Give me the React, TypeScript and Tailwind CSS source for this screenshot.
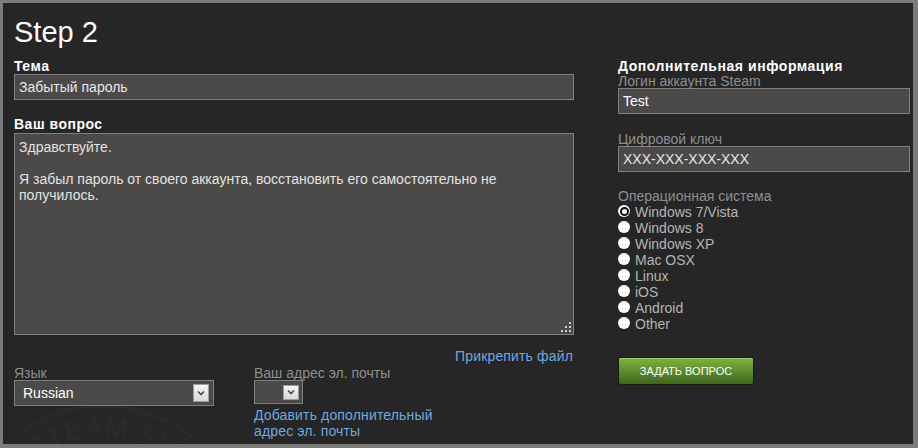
import React from "react";

const OS_LIST = [
  "Windows 7/Vista",
  "Windows 8",
  "Windows XP",
  "Mac OSX",
  "Linux",
  "iOS",
  "Android",
  "Other",
];

function DropButton({ small }: { small?: boolean }) {
  return (
    <span
      className={
        "flex w-[16px] items-center justify-center border border-[#9c9c9c] bg-gradient-to-b from-[#f4f4f4] to-[#d9d9d9] " +
        (small ? "h-[15px]" : "h-[18px]")
      }
    >
      <svg width="8" height="6" viewBox="0 0 8 6">
        <path d="M1 1.5 L4 4.5 L7 1.5" fill="none" stroke="#4a4a4a" strokeWidth="1.6" />
      </svg>
    </span>
  );
}

function Radio({ checked }: { checked?: boolean }) {
  return (
    <span className="mt-[1px] flex h-[12px] w-[12px] shrink-0 items-center justify-center rounded-full bg-white">
      {checked && <span className="h-[9px] w-[9px] rounded-full border-[2px] border-[#111] bg-white" />}
    </span>
  );
}

export default function App() {
  return (
    <div className="h-[448px] w-[918px] bg-[#7b7b79] pb-[4px] pl-[3px] pr-[5px] pt-[3px] font-['Liberation_Sans',Arial,sans-serif] text-[14px]">
      <div className="relative flex h-full gap-[44px] overflow-hidden bg-[#262626] pl-[11px] pt-[13px]">
        {/* faint watermark */}
        <svg className="pointer-events-none absolute left-0 top-0" width="910" height="441">
          <defs>
            <path id="wm" d="M -12 545 A 112 112 0 0 1 212 545" />
          </defs>
          <circle cx="100" cy="545" r="142" fill="none" stroke="#2a2a2a" strokeWidth="3" />
          <text fontSize="27" fill="#2b2b2b" letterSpacing="1" fontFamily="'Liberation Sans', Arial, sans-serif">
            <textPath href="#wm" startOffset="50%" textAnchor="middle">
              STEAM.SU
            </textPath>
          </text>
        </svg>

        {/* left column */}
        <div className="relative w-[560px]">
          <h1 className="text-[29px] leading-[33px] text-white">Step 2</h1>

          <div className="mt-[9px] font-bold leading-[16px] tracking-[0.5px] text-white">Тема</div>
          <div className="flex h-[26px] items-center border border-[#7f7f7f] bg-[#4b4a49] px-[4px] text-[#e6e6e6]">
            Забытый пароль
          </div>

          <div className="mt-[16px] font-bold leading-[16px] tracking-[0.5px] text-white">Ваш вопрос</div>
          <div className="relative mt-[1px] h-[202px] border border-[#7f7f7f] bg-[#4b4a49] px-[4px] pt-[5px] leading-[16px] text-[#e2e2e2]">
            <p>Здравствуйте.</p>
            <p className="mt-[16px]">
              Я забыл пароль от своего аккаунта, восстановить его самостоятельно не получилось.
            </p>
            <svg className="absolute bottom-[1px] right-[1px]" width="12" height="12" viewBox="0 0 12 12">
              <rect x="9" y="1" width="2" height="2" fill="#cfcfcf" />
              <rect x="5" y="5" width="2" height="2" fill="#cfcfcf" />
              <rect x="9" y="5" width="2" height="2" fill="#cfcfcf" />
              <rect x="1" y="9" width="2" height="2" fill="#cfcfcf" />
              <rect x="5" y="9" width="2" height="2" fill="#cfcfcf" />
              <rect x="9" y="9" width="2" height="2" fill="#cfcfcf" />
            </svg>
          </div>

          <div className="mt-[13px] pr-[1px] text-right leading-[16px] tracking-[0.15px] text-[#6fa8dc]">
            Прикрепить файл
          </div>

          <div className="mt-[2px] flex gap-[40px]">
            <div className="w-[200px]">
              <div className="leading-[14px] text-[#8e8e8e]">Язык</div>
              <div className="flex h-[26px] items-center justify-between border border-[#7f7f7f] bg-[#4b4a49] pl-[8px] pr-[4px] text-white">
                <span>Russian</span>
                <DropButton />
              </div>
            </div>
            <div>
              <div className="leading-[14px] text-[#8e8e8e]">Ваш адрес эл. почты</div>
              <div className="flex h-[24px] w-[49px] items-center justify-end border border-[#7f7f7f] bg-[#4b4a49] pr-[3px]">
                <DropButton small />
              </div>
              <div className="mt-[3px] leading-[16px] tracking-[0.15px] text-[#6fa8dc]">
                Добавить дополнительный
                <br />
                адрес эл. почты
              </div>
            </div>
          </div>
        </div>

        {/* right column */}
        <div className="relative mt-[42px] w-[292px]">
          <div className="font-bold leading-[16px] tracking-[0.55px] text-white">Дополнительная информация</div>

          <div className="leading-[14px] text-[#8e8e8e]">Логин аккаунта Steam</div>
          <div className="flex h-[26px] items-center border border-[#7f7f7f] bg-[#4b4a49] px-[4px] text-white">
            Test
          </div>

          <div className="mt-[18px] leading-[14px] text-[#8e8e8e]">Цифровой ключ</div>
          <div className="flex h-[26px] items-center border border-[#7f7f7f] bg-[#4b4a49] px-[4px] text-[#e6e6e6]">
            XXX-XXX-XXX-XXX
          </div>

          <div className="mt-[17px] leading-[14px] text-[#8e8e8e]">Операционная система</div>
          <ul className="mt-[1px]">
            {OS_LIST.map((os, i) => (
              <li key={os} className="flex h-[16px] items-start gap-[5px] leading-[16px] text-[#b4b4b4]">
                <Radio checked={i === 0} />
                <span>{os}</span>
              </li>
            ))}
          </ul>

          <button
            type="button"
            className="ml-[1px] mt-[26px] flex h-[26px] w-[134px] items-center justify-center rounded-[2px] bg-gradient-to-b from-[#7db63e] to-[#3f671d] text-[11px] text-white shadow-[inset_0_1px_0_#a5cf6c,0_0_0_1px_#1b1b1b]"
          >
            ЗАДАТЬ ВОПРОС
          </button>
        </div>
      </div>
    </div>
  );
}
